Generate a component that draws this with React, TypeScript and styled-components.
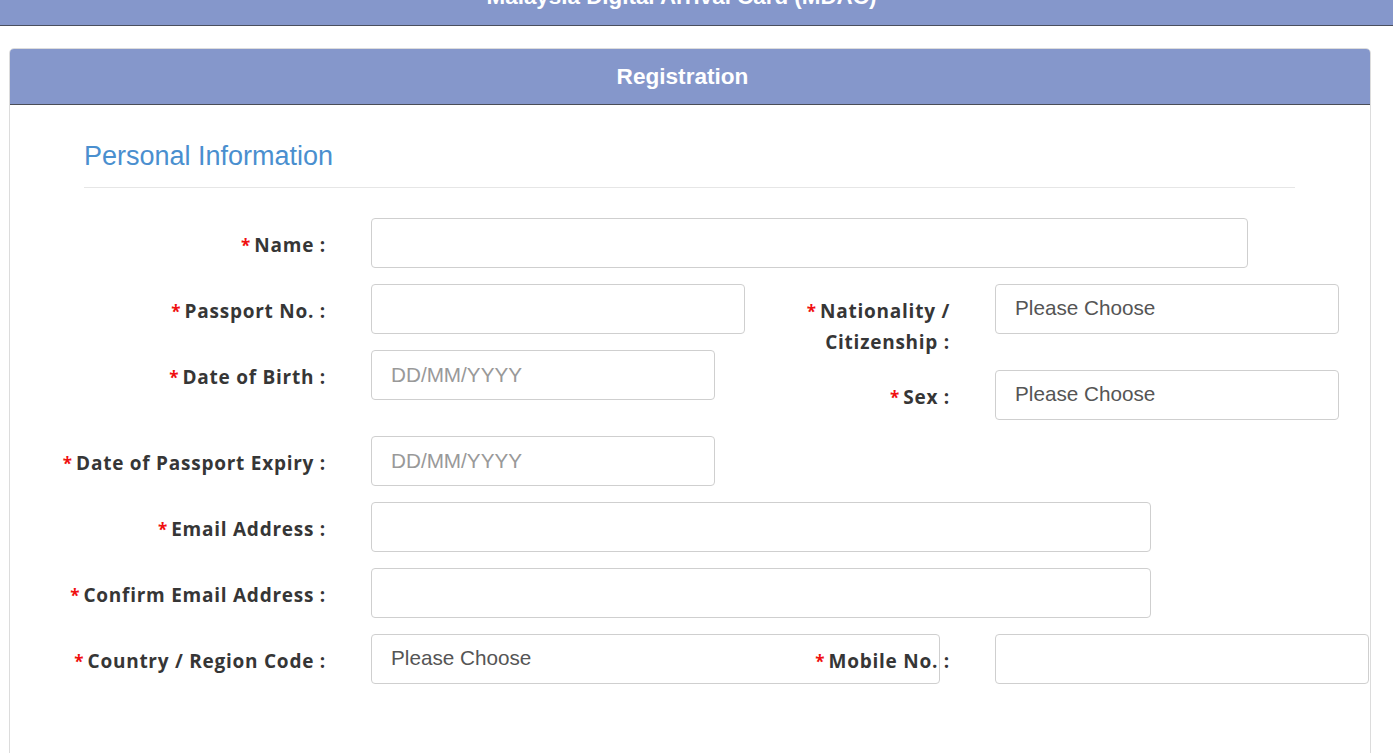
import React from "react";
import styled, {createGlobalStyle} from "styled-components";

const GlobalStyle = createGlobalStyle`
  html, body {
    margin: 0;
    padding: 0;
    background: #fff;
    font-family: "Liberation Sans", Arial, sans-serif;
    overflow: hidden;
  }
`

const TopBar = styled.div`
  height: 25px;
  padding-right: 30px;
  background: #8597cb;
  border-bottom: 1px solid #4a4f5e;
  overflow: hidden;
  text-align: center;
  color: #fff;
  font-weight: 700;
  font-size: 22.4px;
  line-height: 22px;
`

const TopTitle = styled.div`
  margin-top: -14px;
`

const Panel = styled.div`
  margin: 22px 0 0 9px;
  width: 1360px;
  border: 1px solid #dcdcdc;
  border-radius: 5px;
  overflow: hidden;
`

const PanelHeader = styled.div`
  height: 55px;
  padding-right: 15px;
  background: #8597cb;
  border-bottom: 1px solid #4a4d57;
  display: flex;
  align-items: center;
  justify-content: center;
  color: #fff;
  font-weight: 700;
  font-size: 22.6px;
`

const PanelBody = styled.div`
  padding: 37px 0 80px 0;
`

const SectionTitle = styled.h2`
  margin: 0 75px 0 74px;
  padding-bottom: 16px;
  border-bottom: 1px solid #e6e6e6;
  color: #4a8fcf;
  font-weight: 400;
  font-size: 27px;
  line-height: 29px;
`

const Form = styled.div`
  margin-top: 30px;
  display: flex;
  flex-direction: column;
  gap: 16px;
`

const Row = styled.div`
  display: flex;
  align-items: flex-start;
`

const Stack = styled.div<{ gap: number }>`
  display: flex;
  flex-direction: column;
  gap: ${({gap}) => gap}px;
`

const Group = styled.div<{ labelWidth: number, width?: number }>`
  display: flex;
  align-items: flex-start;
  flex-shrink: 0;
  width: ${({width}) => (width ? `${width}px` : 'auto')};

  & > label {
    width: ${({labelWidth}) => labelWidth}px;
  }
`

const Label = styled.label`
  flex-shrink: 0;
  box-sizing: border-box;
  padding-top: 12px;
  text-align: right;
  font-family: "Open Sans", "Noto Sans", sans-serif;
  font-weight: 700;
  font-size: 19px;
  letter-spacing: 0.75px;
  line-height: 30px;
  color: #363636;
`

const Star = styled.span`
  color: #f01010;
  margin-right: 4px;
  font-size: 17px;
  letter-spacing: 0;
`

const Input = styled.input<{ w: number }>`
  flex-shrink: 0;
  box-sizing: border-box;
  margin-left: 45px;
  width: ${({w}) => w}px;
  height: 50px;
  padding: 0 19px;
  border: 1px solid #cfcfcf;
  border-radius: 4px;
  background: #fff;
  font-family: "Liberation Sans", Arial, sans-serif;
  font-size: 20.7px;
  color: #555;
  outline: none;

  &::placeholder {
    color: #999;
  }
`

const Select = styled.div<{ w: number }>`
  flex-shrink: 0;
  box-sizing: border-box;
  margin-left: 45px;
  width: ${({w}) => w}px;
  height: 50px;
  padding: 0 19px 2px;
  border: 1px solid #cfcfcf;
  border-radius: 4px;
  background: #fff;
  display: flex;
  align-items: center;
  font-size: 20.7px;
  color: #555;
`

function Field({label, labelWidth, width, children}: {
    label: React.ReactNode, labelWidth: number, width?: number, children: React.ReactNode
}) {
    return (
        <Group labelWidth={labelWidth} width={width}>
            <Label><Star>*</Star>{label}</Label>
            {children}
        </Group>
    )
}

const LEFT = 316
const LEFT_W = 750
const RIGHT = 190

export default function App() {
    return (
        <>
            <GlobalStyle/>
            <TopBar>
                <TopTitle>Malaysia Digital Arrival Card (MDAC)</TopTitle>
            </TopBar>
            <Panel>
                <PanelHeader>Registration</PanelHeader>
                <PanelBody>
                    <SectionTitle>Personal Information</SectionTitle>
                    <Form>
                        <Row>
                            <Field label="Name :" labelWidth={LEFT}>
                                <Input w={877}/>
                            </Field>
                        </Row>
                        <Row>
                            <Stack gap={16}>
                                <Field label="Passport No. :" labelWidth={LEFT} width={LEFT_W}>
                                    <Input w={374}/>
                                </Field>
                                <Field label="Date of Birth :" labelWidth={LEFT} width={LEFT_W}>
                                    <Input w={344} placeholder="DD/MM/YYYY"/>
                                </Field>
                            </Stack>
                            <Stack gap={13}>
                                <Field label={<>Nationality /<br/>Citizenship :</>} labelWidth={RIGHT}>
                                    <Select w={344}>Please Choose</Select>
                                </Field>
                                <Field label="Sex :" labelWidth={RIGHT}>
                                    <Select w={344}>Please Choose</Select>
                                </Field>
                            </Stack>
                        </Row>
                        <Row>
                            <Field label="Date of Passport Expiry :" labelWidth={LEFT}>
                                <Input w={344} placeholder="DD/MM/YYYY"/>
                            </Field>
                        </Row>
                        <Row>
                            <Field label="Email Address :" labelWidth={LEFT}>
                                <Input w={780}/>
                            </Field>
                        </Row>
                        <Row>
                            <Field label="Confirm Email Address :" labelWidth={LEFT}>
                                <Input w={780}/>
                            </Field>
                        </Row>
                        <Row>
                            <Field label="Country / Region Code :" labelWidth={LEFT} width={LEFT_W}>
                                <Select w={569}>Please Choose</Select>
                            </Field>
                            <Field label="Mobile No. :" labelWidth={RIGHT}>
                                <Input w={374}/>
                            </Field>
                        </Row>
                    </Form>
                </PanelBody>
            </Panel>
        </>
    )
}
